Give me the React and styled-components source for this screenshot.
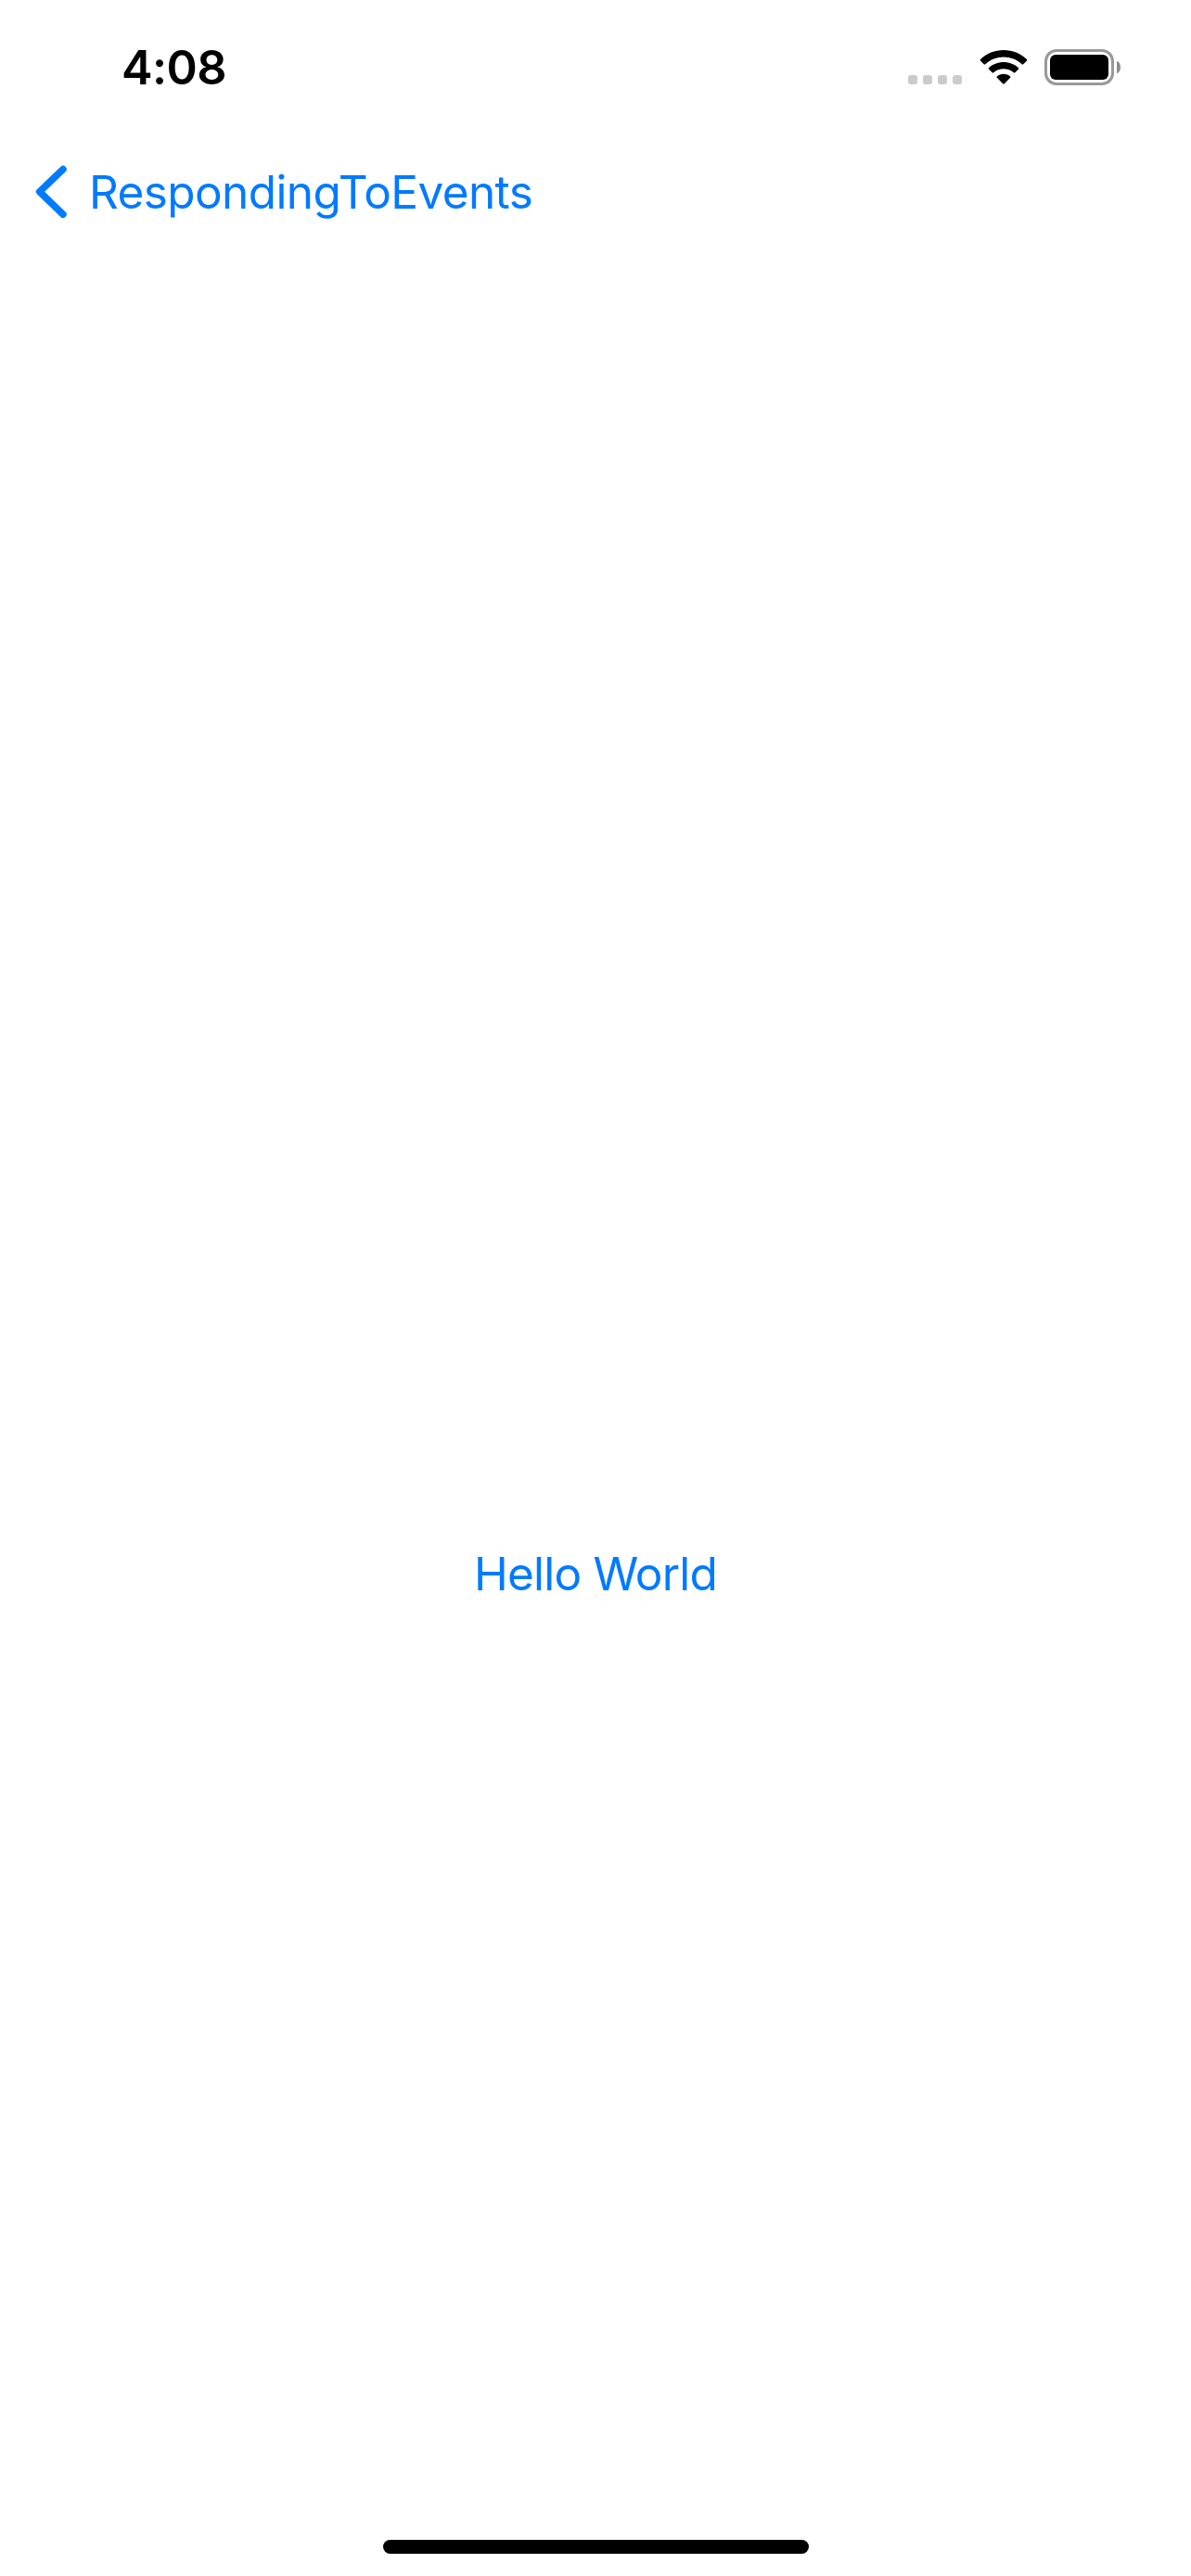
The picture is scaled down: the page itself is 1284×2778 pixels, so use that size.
import React from "react";
import styled, { createGlobalStyle } from "styled-components";

const GlobalStyle = createGlobalStyle`
  *, *::before, *::after { box-sizing: border-box; }
  html, body { margin: 0; padding: 0; background: #fff; }
  body { font-family: Inter, "Liberation Sans", sans-serif; }
`;

const Screen = styled.div`
  display: flex;
  flex-direction: column;
  width: 1284px;
  height: 2778px;
  background: #fff;
  overflow: hidden;
`;

const StatusBar = styled.header`
  display: flex;
  flex: none;
  justify-content: space-between;
  align-items: flex-start;
  height: 141px;
  padding: 53px 76px 0 131px;
`;

const Time = styled.time`
  font-size: 50.5px;
  font-weight: 600;
  line-height: 40px;
  letter-spacing: -0.6px;
  color: #000;
`;

const StatusIcons = styled.div`
  display: flex;
  align-items: center;
  height: 39px;
`;

const Signal = styled.div`
  display: flex;
  align-self: flex-end;
  gap: 6px;
  margin: 0 19px 1px 0;
`;

const SignalDot = styled.span`
  width: 10px;
  height: 10px;
  border-radius: 3px;
  background: #cbcbcb;
`;

const WifiIcon = styled.svg`
  display: block;
  width: 52px;
  height: 39px;
  margin-right: 18px;
`;

const Battery = styled.div`
  display: flex;
  width: 75px;
  height: 39px;
  padding: 3px;
  border: 3px solid #999;
  border-radius: 13px;
`;

const BatteryLevel = styled.div`
  flex: 1;
  border-radius: 6px;
  background: #000;
`;

const BatteryTip = styled.span`
  width: 4px;
  height: 13px;
  margin-left: 3px;
  border-radius: 0 4px 4px 0 / 0 6.5px 6.5px 0;
  background: #8c8c8c;
`;

const NavBar = styled.nav`
  display: flex;
  flex: none;
  align-items: center;
  height: 132px;
  padding-left: 36px;
`;

const TextButton = styled.button`
  display: flex;
  align-items: center;
  padding: 0;
  border: 0;
  background: none;
  color: #007aff;
  font-family: inherit;
  font-size: 49.5px;
  line-height: 60px;
  letter-spacing: ${(p) => p.$tracking};
  white-space: nowrap;
`;

const ChevronIcon = styled.svg`
  display: block;
  width: 40px;
  height: 60px;
  margin-right: 20px;
`;

const Content = styled.main`
  display: flex;
  flex: 1;
  align-items: center;
  justify-content: center;
  padding-top: 445px;
`;

const HomeArea = styled.footer`
  display: flex;
  flex: none;
  align-items: flex-end;
  justify-content: center;
  height: 102px;
  padding-bottom: 24px;
`;

const HomeIndicator = styled.div`
  width: 459px;
  height: 15px;
  border-radius: 8px;
  background: #000;
`;

export default function App() {
  return (
    <>
      <GlobalStyle />
      <Screen>
        <StatusBar>
          <Time>4:08</Time>
          <StatusIcons>
            <Signal>
              <SignalDot />
              <SignalDot />
              <SignalDot />
              <SignalDot />
            </Signal>
            <WifiIcon viewBox="0 0 52 39" aria-hidden="true">
              <path d="M26 1C35.500 1 44.400 4.600 51 11Q51.600 11.800 51 12.500L47.300 16.200Q46.500 16.900 45.700 16.200C40.400 11.300 33.500 8.500 26 8.500S11.600 11.300 6.300 16.200Q5.500 16.900 4.700 16.200L1 12.500Q.400 11.800 1 11C7.600 4.600 16.500 1 26 1Z" />
              <path d="M26 14C32.100 14 37.800 16.300 42.100 20.200Q42.800 20.900 42.100 21.600L38.300 25.300Q37.600 25.900 36.800 25.300C33.900 22.800 30.100 21.300 26 21.300S18.100 22.800 15.200 25.300Q14.400 25.900 13.700 25.300L9.900 21.600Q9.200 20.900 9.900 20.200C14.200 16.300 19.900 14 26 14Z" />
              <path d="M26 26.700C28.800 26.700 31.300 27.700 33.200 29.400Q33.900 30.100 33.200 30.800L26.800 37.200Q26 37.900 25.200 37.200L18.800 30.800Q18.100 30.100 18.800 29.400C20.700 27.700 23.200 26.700 26 26.700Z" />
            </WifiIcon>
            <Battery>
              <BatteryLevel />
            </Battery>
            <BatteryTip />
          </StatusIcons>
        </StatusBar>
        <NavBar>
          <TextButton $tracking="-0.6px">
            <ChevronIcon
              viewBox="0 0 40 60"
              fill="none"
              stroke="currentColor"
              strokeWidth="7.500"
              strokeLinecap="round"
              strokeLinejoin="round"
              aria-hidden="true"
            >
              <path d="M32 5.500L6.700 29.800L32 54.200" />
            </ChevronIcon>
            RespondingToEvents
          </TextButton>
        </NavBar>
        <Content>
          <TextButton $tracking="-0.8px">Hello World</TextButton>
        </Content>
        <HomeArea>
          <HomeIndicator />
        </HomeArea>
      </Screen>
    </>
  );
}
